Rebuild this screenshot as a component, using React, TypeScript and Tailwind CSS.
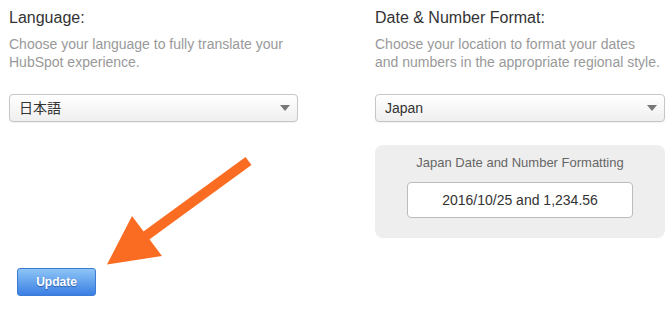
const Select = ({ value }: { value: string }) => {
  return (
    <div className="mt-[23px] flex h-[28px] items-center justify-between rounded-[4px] border border-[#c6c6c6] bg-gradient-to-b from-white to-[#efefef] pl-[9px] pr-[7px] text-[14px] text-[#333] shadow-[0_1px_1px_rgba(0,0,0,0.06)]">
      <span className="font-['Liberation_Sans','Noto_Sans_CJK_JP',sans-serif]">{value}</span>
      <span className="h-0 w-0 border-x-[5px] border-t-[6px] border-x-transparent border-t-[#777]" />
    </div>
  )
}

const App = () => {
  return (
    <div className="relative h-[309px] w-[670px] overflow-hidden bg-white font-['Liberation_Sans',Arial,sans-serif]">
      <div className="flex gap-[77px] pl-[9px] pt-[8px]">
        <div className="flex w-[289px] flex-col">
          <h2 className="text-[16px] leading-[20px] text-[#333]">Language:</h2>
          <p className="mt-[7px] text-[14px] leading-[18px] text-[#999]">
            Choose your language to fully translate your
            <br />
            HubSpot experience.
          </p>
          <Select value="日本語" />
          <div className="mt-[146px] pl-[8px]">
            <button className="flex h-[28px] w-[79px] items-center justify-center rounded-[3px] border border-[#3d7ad4] bg-gradient-to-b from-[#8ec5f6] to-[#3a7ee2] text-[12px] font-bold text-white [text-shadow:0_1px_1px_rgba(0,40,120,0.5)]">
              Update
            </button>
          </div>
        </div>
        <div className="flex w-[290px] flex-col">
          <h2 className="text-[16px] leading-[20px] text-[#333]">Date &amp; Number Format:</h2>
          <p className="mt-[7px] whitespace-nowrap text-[14px] leading-[18px] text-[#999]">
            Choose your location to format your dates
            <br />
            and numbers in the appropriate regional style.
          </p>
          <Select value="Japan" />
          <div className="mt-[23px] flex h-[93px] flex-col items-center rounded-[8px] bg-[#eeeeee] pt-[10px]">
            <p className="text-[13px] leading-[16px] text-[#666]">Japan Date and Number Formatting</p>
            <div className="mt-[11px] flex h-[36px] w-[226px] items-center justify-center rounded-[4px] border border-[#bcbcbc] bg-white text-[14px] text-[#333]">
              2016/10/25 and 1,234.56
            </div>
          </div>
        </div>
      </div>
      <svg className="absolute left-[100px] top-[150px]" width="160" height="120" viewBox="0 0 160 120">
        <line x1="148.5" y1="11" x2="45" y2="86.5" stroke="#fa6c22" strokeWidth="10" />
        <polygon points="7,114.5 32,66 62,106" fill="#fa6c22" />
      </svg>
    </div>
  )
}

export default App
